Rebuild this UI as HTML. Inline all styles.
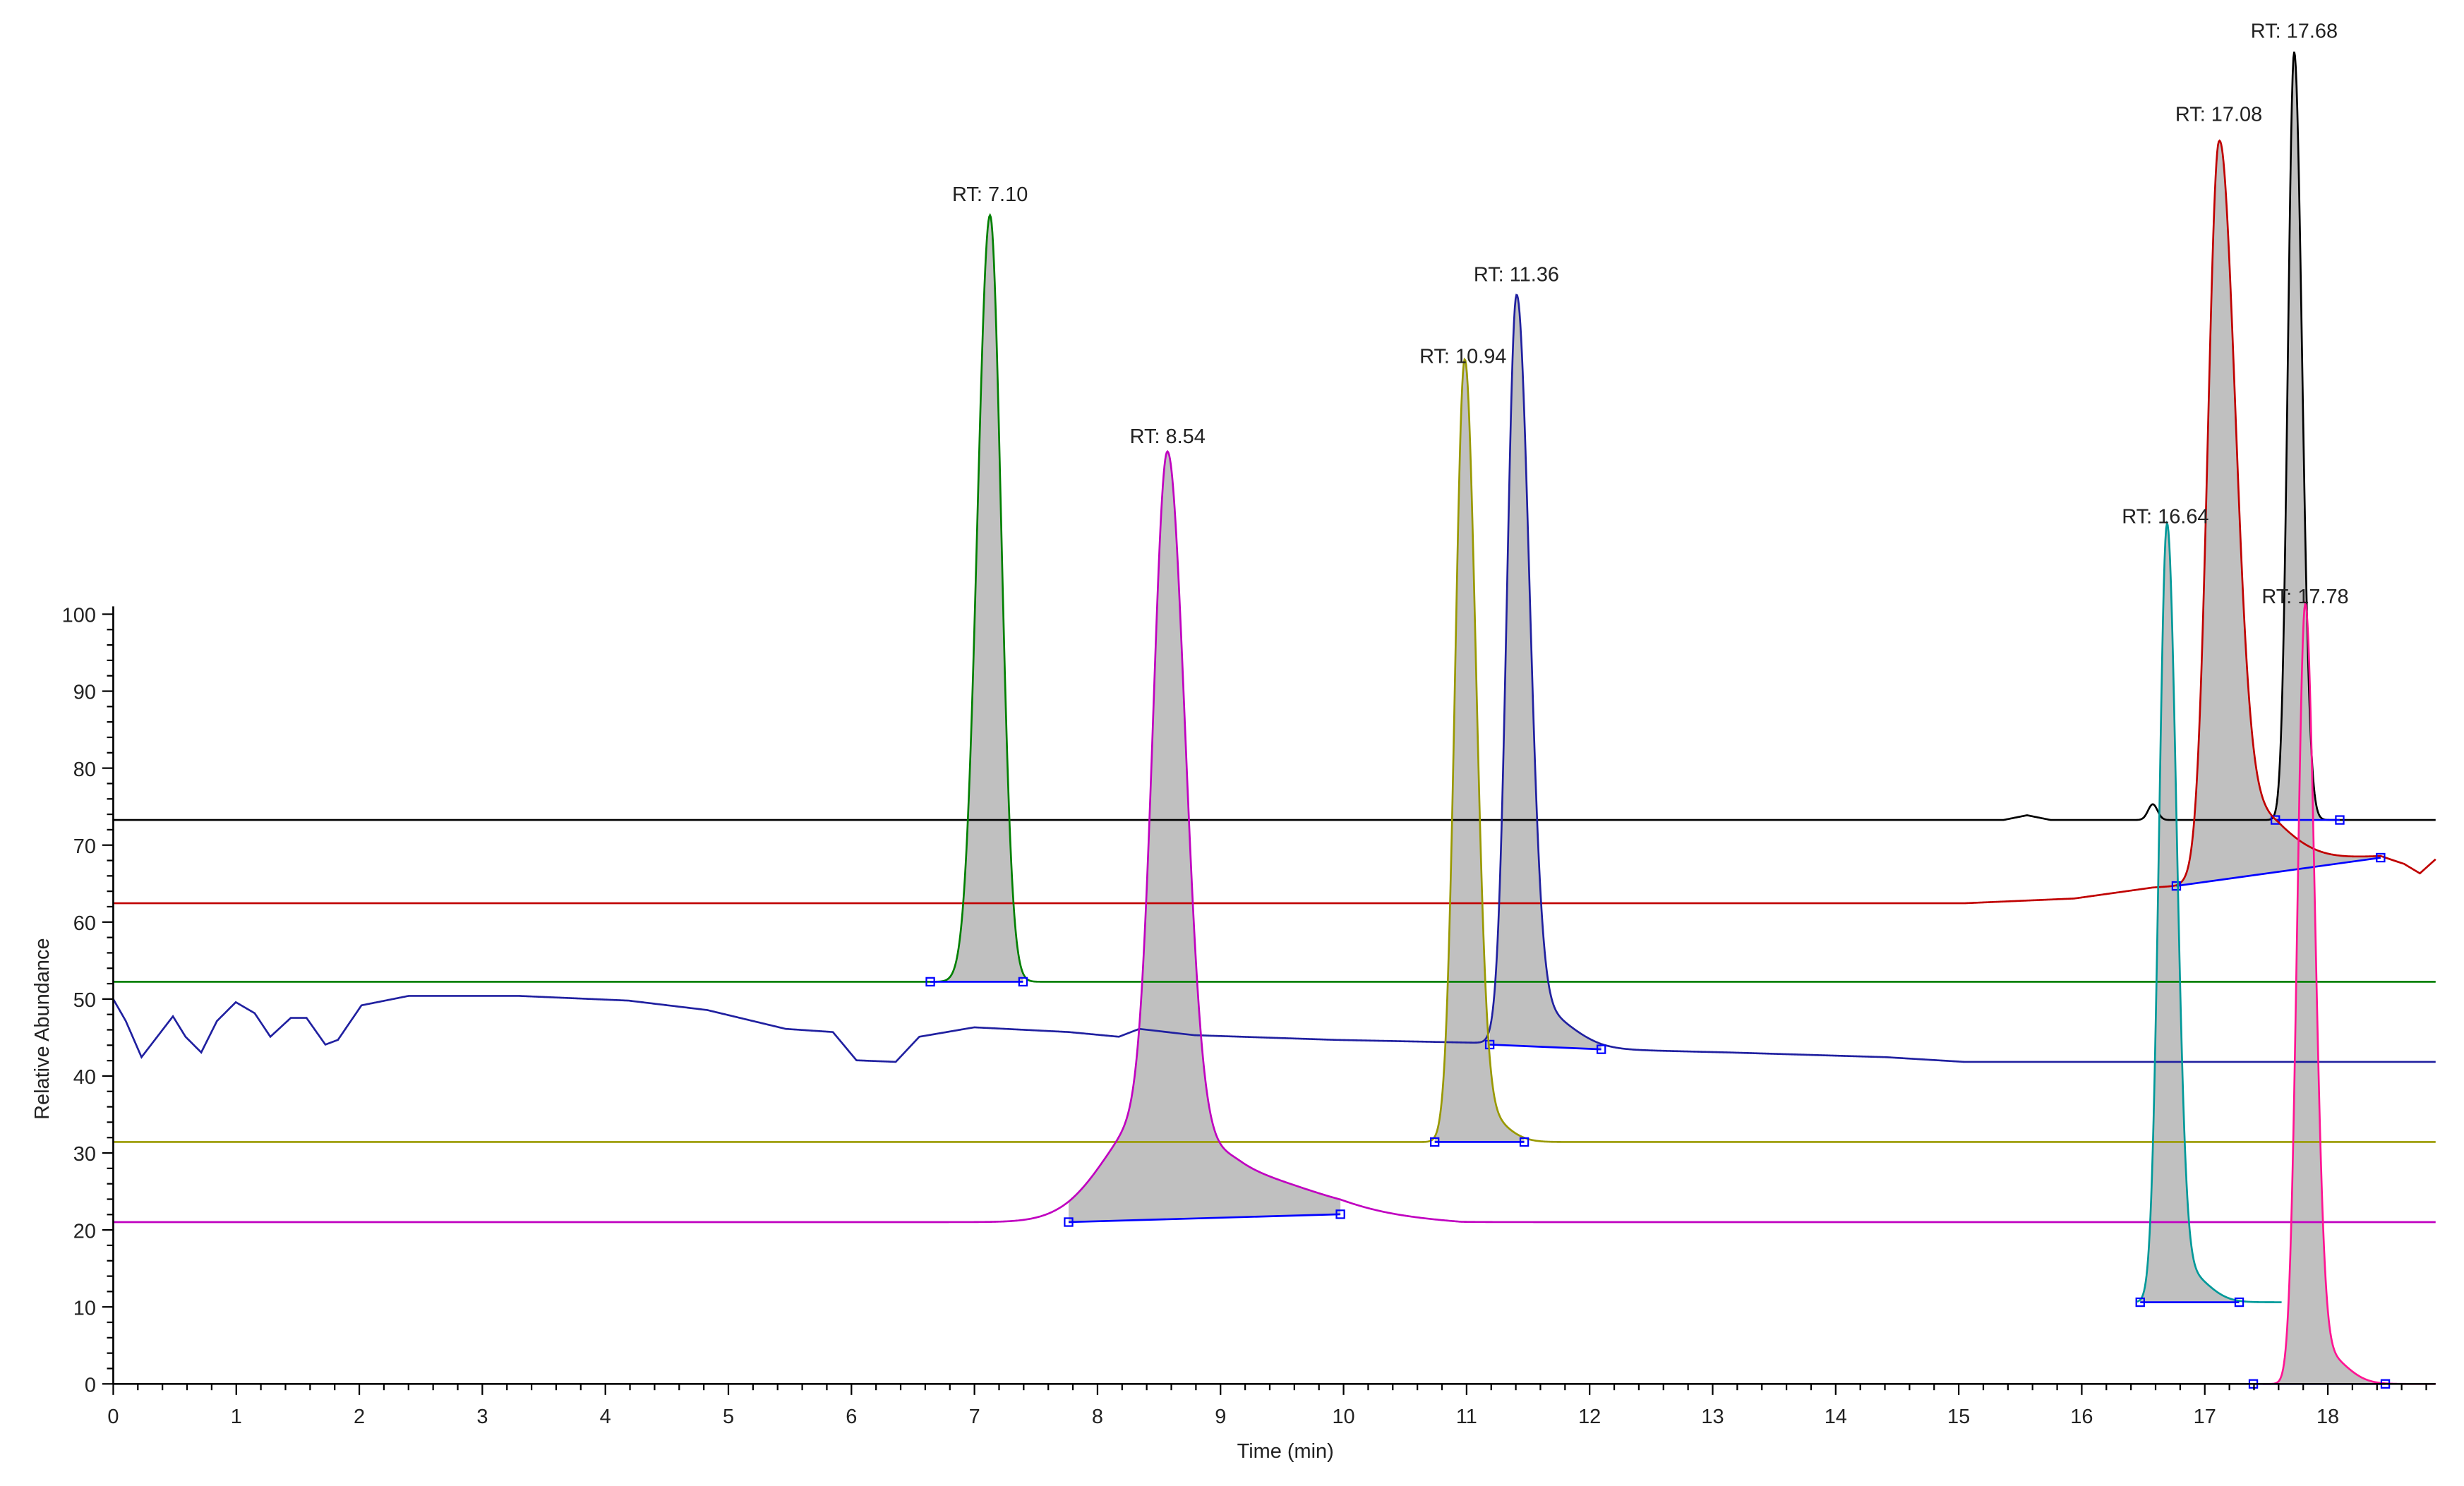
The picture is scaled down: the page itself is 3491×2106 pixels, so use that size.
<!DOCTYPE html>
<html><head><meta charset="utf-8">
<style>
html,body{margin:0;padding:0;background:#fff;}
svg{display:block;}
text{font-family:"Liberation Sans",sans-serif;}
</style></head>
<body>
<svg id="s" xmlns="http://www.w3.org/2000/svg" width="3491" height="2106" viewBox="0 0 1568 946">
<rect width="1568" height="946" fill="#fff"/>
<g id="fills"></g>
<g id="traces"></g>
<g id="axes"></g>
<g id="labels" font-size="13" fill="#222" text-anchor="middle">
<text x="630" y="128">RT: 7.10</text>
<text x="743" y="282">RT: 8.54</text>
<text x="931" y="231">RT: 10.94</text>
<text x="965" y="179">RT: 11.36</text>
<text x="1378" y="333">RT: 16.64</text>
<text x="1412" y="77">RT: 17.08</text>
<text x="1460" y="24">RT: 17.68</text>
<text x="1467" y="384">RT: 17.78</text>
</g>
<text x="818" y="928" font-size="13" text-anchor="middle" fill="#222">Time (min)</text>
<text transform="translate(31,655) rotate(-90)" font-size="13" text-anchor="middle" fill="#222">Relative Abundance</text>
</svg>
<script>
(function(){
var NS="http://www.w3.org/2000/svg";
function el(p,t,a){var e=document.createElementNS(NS,t);for(var k in a)e.setAttribute(k,a[k]);document.getElementById(p).appendChild(e);return e;}
function X(t){return 72+t*78.3;}
function Y(v){return 881-v*4.9;}
function interp(pts,x){if(x<=pts[0][0])return pts[0][1];for(var i=1;i<pts.length;i++){if(x<=pts[i][0]){var a=pts[i-1],b=pts[i];return a[1]+(b[1]-a[1])*(x-a[0])/(b[0]-a[0]);}}return pts[pts.length-1][1];}
function peak(x,c,h,s1,s2){var s=x<c?s1:s2;var d=(x-c)/s;return h*Math.exp(-0.5*d*d);}
var x0=72,x1=1550;
var traces=[
 {col:"#000",base:[[72,522],[1275,522],[1290,519],[1305,522],[1550,522]],pk:[[1460,489,4,5],[1370,10,3,3]],fill:[1448,1489],ib:[[1448,522],[1489,522]]},
 {col:"#c00000",base:[[72,575],[1250,575],[1320,572],[1370,565],[1385,564],[1450,548],[1515,545],[1530,550],[1540,556],[1550,547]],pk:[[1412,445,7,10],[1425,40,12,25]],fill:[1385,1515],ib:[[1385,564],[1515,546]]},
 {col:"#008000",base:[[72,625],[1550,625]],pk:[[630,488,8,7]],fill:[592,651],ib:[[592,625],[651,625]]},
 {col:"#2020a0",base:[[72,636],[80,650],[90,673],[100,660],[110,647],[118,660],[128,670],[138,650],[150,638],[162,645],[172,660],[185,648],[195,648],[207,665],[215,662],[230,640],[260,634],[330,634],[400,637],[450,643],[500,655],[530,657],[545,675],[570,676],[585,660],[620,654],[680,657],[712,660],[725,655],[760,659],[850,662],[948,664],[1019,668],[1100,670],[1200,673],[1250,676],[1550,676]],pk:[[965,462,6,8],[975,25,10,22]],fill:[948,1019],ib:[[948,665],[1019,668]]},
 {col:"#999900",base:[[72,727],[1550,727]],pk:[[932,489,6,7],[942,20,8,14]],fill:[913,970],ib:[[913,727],[970,727]]},
 {col:"#c000c0",base:[[72,778],[680,778],[853,773],[900,776],[930,778],[1550,778]],pk:[[743,420,9,11],[735,70,30,28],[790,25,20,45]],fill:[680,853],ib:[[680,778],[853,773]]},
 {col:"#009999",base:[[1362,829],[1450,829]],pk:[[1379,488,5,6],[1390,20,8,14]],fill:[1362,1425],ib:[[1362,829],[1425,829]],range:[1360,1452]},
 {col:"#ff1493",base:[[1430,881],[1550,881]],pk:[[1467,489,5,6],[1478,20,8,14]],fill:[1434,1518],ib:[[1434,881],[1518,881]],range:[1440,1550]}
];
traces.forEach(function(t){
 var a=t.range?t.range[0]:x0,b=t.range?t.range[1]:x1;
 function f(x){var y=interp(t.base,x);t.pk.forEach(function(p){y-=peak(x,p[0],p[1],p[2],p[3]);});return y;}
 var d="";for(var x=a;x<=b;x+=0.5){d+=(x==a?"M":"L")+x.toFixed(1)+","+f(x).toFixed(2);}
 el("traces","path",{d:d,fill:"none",stroke:t.col,"stroke-width":"1.2"});
 var fd="";for(var x=t.fill[0];x<=t.fill[1];x+=0.5){var yb=interp(t.ib,x);fd+=(x==t.fill[0]?"M":"L")+x.toFixed(1)+","+Math.min(f(x),yb).toFixed(2);}
 fd+="L"+t.ib[1][0]+","+t.ib[1][1]+"L"+t.ib[0][0]+","+t.ib[0][1]+"Z";
 el("fills","path",{d:fd,fill:"#c0c0c0",stroke:"none"});
 el("traces","line",{x1:t.ib[0][0],y1:t.ib[0][1],x2:t.ib[1][0],y2:t.ib[1][1],stroke:"#0000ff","stroke-width":"1.2"});
 [t.ib[0],t.ib[1]].forEach(function(p){el("traces","rect",{x:p[0]-2.5,y:p[1]-2.5,width:5,height:5,fill:"none",stroke:"#0000ff","stroke-width":"1"});});
});
el("axes","line",{x1:72,y1:881,x2:1550,y2:881,stroke:"#000","stroke-width":"1.2"});
el("axes","line",{x1:72,y1:386,x2:72,y2:881,stroke:"#000","stroke-width":"1.2"});
for(var i=0;i<=94;i++){var t=i*0.2,x=X(t);if(x>1550)break;var maj=(i%5==0);
 el("axes","line",{x1:x,y1:881,x2:x,y2:881+(maj?7:4),stroke:"#000","stroke-width":"1"});
 if(maj){var tx=el("axes","text",{x:x,y:906,"font-size":"13","text-anchor":"middle",fill:"#222"});tx.textContent=String(i/5);}}
for(var v=0;v<=100;v+=2){var y=Y(v);var maj=(v%10==0);
 el("axes","line",{x1:72,y1:y,x2:72-(maj?7:4),y2:y,stroke:"#000","stroke-width":"1"});
 if(maj){var tx=el("axes","text",{x:61,y:y+5,"font-size":"13","text-anchor":"end",fill:"#222"});tx.textContent=String(v);}}
})();
</script>
</body></html>
